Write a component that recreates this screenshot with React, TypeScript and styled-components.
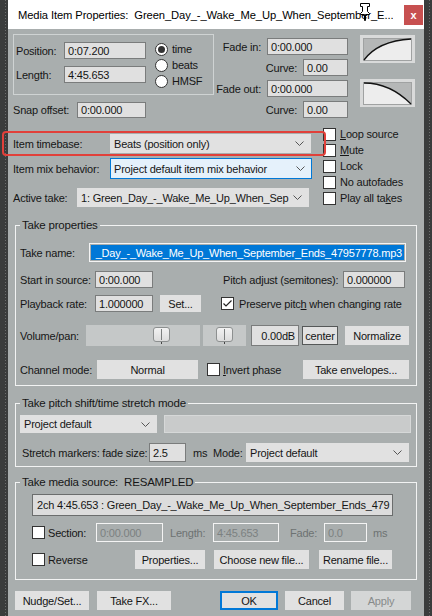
import React from "react";
import styled, { createGlobalStyle, css } from "styled-components";

const GlobalStyle = createGlobalStyle`
  html, body {
    margin: 0;
    padding: 0;
  }
  body {
    width: 432px;
    height: 616px;
    overflow: hidden;
    background: #363838;
    font-family: "Liberation Sans", Arial, sans-serif;
    font-size: 11px;
    letter-spacing: -0.2px;
    color: #161616;
  }
`;

const Screen = styled.div`
  display: flex;
  width: 432px;
  height: 616px;
  overflow: hidden;
`;

const Edge = styled.div<{ $dot: number }>`
  flex: none;
  width: 8px;
  background-color: #3a3c3c;
  background-image: repeating-linear-gradient(
    to bottom,
    #6c6e6e 0 1px,
    transparent 1px 3px
  );
  background-size: 1px 100%;
  background-position: ${(p) => p.$dot}px 0;
  background-repeat: no-repeat;
`;

const Window = styled.div`
  flex: none;
  width: 416px;
  display: flex;
  flex-direction: column;
  background: #a9aeae;
`;

const TitleBar = styled.div`
  position: relative;
  flex: none;
  height: 29px;
  display: flex;
  align-items: center;
  padding-left: 10px;
  background: #fff;
  color: #000;
  font-size: 11.2px;
  letter-spacing: -0.1px;
`;

const TitleText = styled.span`
  flex: 0 1 auto;
  min-width: 0;
  overflow: hidden;
  white-space: nowrap;
`;

const CloseBox = styled.div`
  flex: none;
  margin-left: auto;
  margin-right: 1px;
  width: 19px;
  height: 20px;
  display: flex;
  align-items: center;
  justify-content: center;
  background: #c75050;
  color: #fff;
  font-weight: bold;
  font-size: 11px;
`;

const Cursor = styled.svg`
  position: absolute;
  left: 351px;
  top: 3px;
`;

const Body = styled.div`
  display: flex;
  flex-direction: column;
  padding-left: 5px;
`;

const Row = styled.div<{ $mt?: number; $h?: number }>`
  position: relative;
  display: flex;
  align-items: center;
  flex: none;
  margin-top: ${(p) => p.$mt ?? 0}px;
  height: ${(p) => (p.$h ? `${p.$h}px` : "auto")};
`;

const Column = styled.div<{ $w?: number; $ml?: number; $mt?: number; $pt?: number; $gap?: number }>`
  display: flex;
  flex-direction: column;
  flex: none;
  width: ${(p) => (p.$w ? `${p.$w}px` : "auto")};
  margin-left: ${(p) => p.$ml ?? 0}px;
  margin-top: ${(p) => p.$mt ?? 0}px;
  padding-top: ${(p) => p.$pt ?? 0}px;
  gap: ${(p) => p.$gap ?? 0}px;
`;

const Text = styled.span<{ $w?: number; $ml?: number; $right?: boolean; $dim?: boolean }>`
  flex: none;
  width: ${(p) => (p.$w ? `${p.$w}px` : "auto")};
  margin-left: ${(p) => p.$ml ?? 0}px;
  text-align: ${(p) => (p.$right ? "right" : "left")};
  color: ${(p) => (p.$dim ? "#6d7272" : "#161616")};
  white-space: nowrap;
`;

const Field = styled.div<{ $w: number; $h?: number; $ml?: number; $disabled?: boolean; $right?: boolean }>`
  flex: none;
  box-sizing: border-box;
  width: ${(p) => p.$w}px;
  height: ${(p) => p.$h ?? 17}px;
  margin-left: ${(p) => p.$ml ?? 0}px;
  display: flex;
  align-items: center;
  justify-content: ${(p) => (p.$right ? "flex-end" : "flex-start")};
  padding: 0 3px;
  overflow: hidden;
  white-space: nowrap;
  ${(p) =>
    p.$disabled
      ? css`
          border: 1px solid #f4f4f4;
          background: transparent;
          color: #7c8181;
        `
      : css`
          border: 1px solid #7a7c7c;
          background: #e0e0e0;
          color: #141414;
        `}
`;

const NameField = styled.div<{ $w: number }>`
  flex: none;
  box-sizing: border-box;
  width: ${(p) => p.$w}px;
  height: 19px;
  border: 1px solid #f4f4f4;
  padding: 1px;
  display: flex;
`;

const Selection = styled.div`
  flex: 1;
  display: flex;
  align-items: center;
  justify-content: flex-end;
  overflow: hidden;
  white-space: nowrap;
  background: #0078d7;
  color: #fff;
  padding-right: 2px;
`;

const SourceField = styled.div<{ $w: number; $ml: number }>`
  flex: none;
  box-sizing: border-box;
  width: ${(p) => p.$w}px;
  height: 22px;
  margin-left: ${(p) => p.$ml}px;
  display: flex;
  align-items: center;
  padding: 0 4px;
  overflow: hidden;
  white-space: nowrap;
  border: 1px solid #6b6d6d;
  background: #dcdcdc;
`;

const Combo = styled.div<{ $w: number; $h?: number; $ml?: number; $focus?: boolean }>`
  flex: none;
  box-sizing: border-box;
  width: ${(p) => p.$w}px;
  height: ${(p) => p.$h ?? 19}px;
  margin-left: ${(p) => p.$ml ?? 0}px;
  display: flex;
  align-items: center;
  justify-content: space-between;
  padding: 0 6px 0 3px;
  white-space: nowrap;
  overflow: hidden;
  background: ${(p) => (p.$focus ? "#e5f1fb" : "#e1e1e1")};
  border: 1px solid ${(p) => (p.$focus ? "#0078d7" : "#e1e1e1")};
`;

const InactiveBar = styled.div<{ $w: number; $ml: number }>`
  flex: none;
  box-sizing: border-box;
  width: ${(p) => p.$w}px;
  height: 18px;
  margin-left: ${(p) => p.$ml}px;
  background: #c9cbcb;
  border: 1px solid #d6d8d8;
`;

const Btn = styled.button<{ $w: number; $h?: number; $ml?: number; $tone?: "primary" | "outlined" }>`
  flex: none;
  box-sizing: border-box;
  width: ${(p) => p.$w}px;
  height: ${(p) => p.$h ?? 19}px;
  margin: 0 0 0 ${(p) => p.$ml ?? 0}px;
  padding: 0;
  font: inherit;
  letter-spacing: inherit;
  color: #141414;
  background: #e1e1e1;
  border: 1px solid #e1e1e1;
  white-space: nowrap;
  ${(p) =>
    p.$tone === "primary" &&
    css`
      border: 2px solid #0078d7;
    `}
  ${(p) =>
    p.$tone === "outlined" &&
    css`
      border: 1px solid #555858;
    `}
  &:disabled {
    color: #878b8b;
    background: #d4d6d6;
    border-color: #d4d6d6;
  }
`;

const Box = styled.span<{ $ml?: number }>`
  flex: none;
  box-sizing: border-box;
  width: 13px;
  height: 13px;
  margin-left: ${(p) => p.$ml ?? 0}px;
  border: 1px solid #333;
  background: #fff;
  display: flex;
  align-items: center;
  justify-content: center;
`;

const RadioDot = styled.span<{ $on?: boolean }>`
  flex: none;
  box-sizing: border-box;
  width: 13px;
  height: 13px;
  border-radius: 50%;
  border: 1px solid #333;
  background: #fff;
  display: flex;
  align-items: center;
  justify-content: center;
  &::after {
    content: "";
    width: 7px;
    height: 7px;
    border-radius: 50%;
    background: ${(p) => (p.$on ? "#333" : "transparent")};
  }
`;

const OptionRow = styled.div`
  display: flex;
  align-items: center;
  height: 16px;
  gap: 4px;
`;

const TopSection = styled.div`
  display: flex;
  margin-top: 5px;
`;

const TimeBox = styled.div`
  box-sizing: border-box;
  width: 201px;
  height: 61px;
  display: flex;
  align-items: flex-start;
  padding: 7px 0 0 2px;
  border: 1px solid #cfd3d3;
`;

const CurveFrame = styled.div`
  width: 55px;
  height: 28px;
  background: #d9dada;
`;

const MidSection = styled.div`
  display: flex;
  margin-top: 8px;
`;

const Highlight = styled.div`
  position: absolute;
  left: -11px;
  top: -3px;
  width: 324px;
  height: 25px;
  box-sizing: border-box;
  border: 2.5px solid #e1403a;
  border-radius: 4px;
  pointer-events: none;
`;

const Group = styled.fieldset<{ $mt: number; $pb: number }>`
  box-sizing: border-box;
  width: 402px;
  min-width: 0;
  margin: ${(p) => p.$mt}px 0 0 2px;
  padding: 0 0 ${(p) => p.$pb}px 4px;
  border: 1px solid #f2f3f3;
`;

const Legend = styled.legend`
  padding: 0 2px;
  margin-left: 0;
  line-height: 14px;
  font-size: 11.5px;
`;

const Track = styled.div<{ $w: number; $ml?: number }>`
  position: relative;
  flex: none;
  width: ${(p) => p.$w}px;
  height: 21px;
  margin-left: ${(p) => p.$ml ?? 0}px;
  background: #c5c8c8;
`;

const Thumb = styled.div`
  position: absolute;
  top: 2px;
  box-sizing: border-box;
  width: 17px;
  height: 15px;
  border: 1px solid #8d9090;
  border-radius: 3px;
  background: linear-gradient(#f2f2f2, #dcdcdc);
  &::before {
    content: "";
    position: absolute;
    left: 7px;
    top: 1px;
    width: 1px;
    height: 11px;
    background: #7b7e7e;
  }
  &::after {
    content: "";
    position: absolute;
    left: 7px;
    top: 14px;
    width: 1px;
    height: 2px;
    background: #444;
  }
`;

const Chevron = () => (
  <svg width="9" height="5" viewBox="0 0 9 5">
    <path d="M0.5 0.5 L4.5 4.5 L8.5 0.5" fill="none" stroke="#555" strokeWidth="1" />
  </svg>
);

const Check: React.FC<{ on?: boolean; ml?: number }> = ({ on, ml }) => (
  <Box $ml={ml}>
    {on && (
      <svg width="11" height="11" viewBox="0 0 11 11">
        <path d="M1.5 5.5 L4 8 L9.5 2.5" fill="none" stroke="#222" strokeWidth="1.2" />
      </svg>
    )}
  </Box>
);

const FadeCurve: React.FC<{ out?: boolean }> = ({ out }) => (
  <CurveFrame>
    <svg width="55" height="28" viewBox="0 0 55 28">
      <rect x="3.5" y="3.5" width="48" height="22" fill="#ededed" stroke="#a0a2a2" />
      {out ? (
        <>
          <path d="M4 4 Q30 4 51 25 L51 4 Z" fill="#b5b7b7" />
          <path d="M4 4 Q30 4 51 25" fill="none" stroke="#111" strokeWidth="1.3" />
        </>
      ) : (
        <>
          <path d="M4 25 Q18 6 51 4 L4 4 Z" fill="#b5b7b7" />
          <path d="M4 25 Q18 6 51 4" fill="none" stroke="#111" strokeWidth="1.3" />
        </>
      )}
    </svg>
  </CurveFrame>
);

const checks: { label: React.ReactNode }[] = [
  { label: <><u>L</u>oop source</> },
  { label: <><u>M</u>ute</> },
  { label: "Lock" },
  { label: "No autofades" },
  { label: <>Play all ta<u>k</u>es</> },
];

export default function App() {
  return (
    <>
      <GlobalStyle />
      <Screen>
        <Edge $dot={5} />
        <Window>
          <TitleBar>
            <TitleText>Media Item Properties:&nbsp; Green_Day_-_Wake_Me_Up_When_September_E...</TitleText>
            <Cursor width="12" height="18" viewBox="0 0 12 18">
              <path
                d="M1.5 0.5 H10.5 V3.5 H8.5 V8.5 L10.5 10.5 V11.5 H6.5 V17.5 H5.5 V11.5 H1.5 V10.5 L3.5 8.5 V3.5 H1.5 Z"
                fill="#fff"
                stroke="#000"
              />
            </Cursor>
            <CloseBox>x</CloseBox>
          </TitleBar>

          <Body>
            <TopSection>
              <Column $w={201}>
                <TimeBox>
                  <Column $gap={7}>
                    <Row $h={17}>
                      <Text $w={48}>Position:</Text>
                      <Field $w={82}>0:07.200</Field>
                    </Row>
                    <Row $h={17}>
                      <Text $w={48}>Length:</Text>
                      <Field $w={82}>4:45.653</Field>
                    </Row>
                  </Column>
                  <Column $ml={9} $mt={-1}>
                    <OptionRow>
                      <RadioDot $on />
                      <Text>time</Text>
                    </OptionRow>
                    <OptionRow>
                      <RadioDot />
                      <Text>beats</Text>
                    </OptionRow>
                    <OptionRow>
                      <RadioDot />
                      <Text>HMSF</Text>
                    </OptionRow>
                  </Column>
                </TimeBox>
                <Row $mt={7} $h={16}>
                  <Text $w={64}>Snap offset:</Text>
                  <Field $w={69} $h={16}>0:00.000</Field>
                </Row>
              </Column>

              <Column $pt={4} $gap={4}>
                <Row $h={17}>
                  <Text $w={47} $right>Fade in:</Text>
                  <Field $w={81} $ml={6}>0:00.000</Field>
                </Row>
                <Row $h={17}>
                  <Text $w={83} $right>Curve:</Text>
                  <Field $w={45} $ml={6}>0.00</Field>
                </Row>
                <Row $h={17}>
                  <Text $w={47} $right>Fade out:</Text>
                  <Field $w={81} $ml={6}>0:00.000</Field>
                </Row>
                <Row $h={17}>
                  <Text $w={83} $right>Curve:</Text>
                  <Field $w={45} $ml={6}>0.00</Field>
                </Row>
              </Column>

              <Column $ml={12} $pt={1} $gap={16}>
                <FadeCurve />
                <FadeCurve out />
              </Column>
            </TopSection>

            <MidSection>
              <Column $w={299} $pt={8}>
                <Row $h={19}>
                  <Highlight />
                  <Text $w={97}>Item timebase:</Text>
                  <Combo $w={201}>
                    <span>Beats (position only)</span>
                    <Chevron />
                  </Combo>
                </Row>
                <Row $mt={5} $h={21}>
                  <Text $w={97}>Item mix behavior:</Text>
                  <Combo $w={202} $h={21} $focus>
                    <span>Project default item mix behavior</span>
                    <Chevron />
                  </Combo>
                </Row>
                <Row $mt={9} $h={19}>
                  <Text $w={64}>Active take:</Text>
                  <Combo $w={232}>
                    <span>1: Green_Day_-_Wake_Me_Up_When_Sep</span>
                    <Chevron />
                  </Combo>
                </Row>
              </Column>
              <Column $ml={11}>
                {checks.map((c, i) => (
                  <OptionRow key={i}>
                    <Check />
                    <Text>{c.label}</Text>
                  </OptionRow>
                ))}
              </Column>
            </MidSection>

            <Group $mt={11} $pb={6}>
              <Legend>Take properties</Legend>
              <Row $mt={11} $h={19}>
                <Text $w={69}>Take name:</Text>
                <NameField $w={317}>
                  <Selection>
                    <span>_Day_-_Wake_Me_Up_When_September_Ends_47957778.mp3</span>
                  </Selection>
                </NameField>
              </Row>
              <Row $mt={9} $h={17}>
                <Text $w={75}>Start in source:</Text>
                <Field $w={58}>0:00.000</Field>
                <Text $w={120} $ml={70}>Pitch adjust (semitones):</Text>
                <Field $w={62}>0.000000</Field>
              </Row>
              <Row $mt={7} $h={17}>
                <Text $w={75}>Playback rate:</Text>
                <Field $w={58}>1.000000</Field>
                <Btn $w={41} $h={17} $ml={7}>Set...</Btn>
                <Check on ml={20} />
                <Text $ml={5}>
                  Preserve pitc<u>h</u> when changing rate
                </Text>
              </Row>
              <Row $mt={13} $h={21}>
                <Text $w={66}>Volume/pan:</Text>
                <Track $w={114}>
                  <Thumb style={{ left: 67 }} />
                </Track>
                <Track $w={43} $ml={3}>
                  <Thumb style={{ left: 13 }} />
                </Track>
                <Field $w={48} $h={21} $ml={5} $right>0.00dB</Field>
                <Btn $w={36} $ml={3} $tone="outlined">center</Btn>
                <Btn $w={64} $ml={7}>Normalize</Btn>
              </Row>
              <Row $mt={14} $h={19}>
                <Text $w={77}>Channel mode:</Text>
                <Btn $w={101}>Normal</Btn>
                <Check ml={9} />
                <Text $w={80} $ml={3}>
                  <u>I</u>nvert phase
                </Text>
                <Btn $w={106}>Take envelopes...</Btn>
              </Row>
            </Group>

            <Group $mt={10} $pb={4}>
              <Legend>Take pitch shift/time stretch mode</Legend>
              <Row $mt={5} $h={18}>
                <Combo $w={137} $h={18}>
                  <span>Project default</span>
                  <Chevron />
                </Combo>
                <InactiveBar $w={247} $ml={7} />
              </Row>
              <Row $mt={10} $h={19}>
                <Text $w={127} $ml={2}>Stretch markers: fade size:</Text>
                <Field $w={37} $h={19}>2.5</Field>
                <Text $w={20} $ml={7}>ms</Text>
                <Text $w={29} $right>Mode:</Text>
                <Combo $w={163} $ml={4}>
                  <span>Project default</span>
                  <Chevron />
                </Combo>
              </Row>
            </Group>

            <Group $mt={8} $pb={10}>
              <Legend>Take media source:&nbsp; RESAMPLED</Legend>
              <Row $mt={5} $h={22}>
                <SourceField $w={361} $ml={12}>
                  2ch 4:45.653 : Green_Day_-_Wake_Me_Up_When_September_Ends_479
                </SourceField>
              </Row>
              <Row $mt={7} $h={19}>
                <Check ml={12} />
                <Text $w={48} $ml={3}>Section:</Text>
                <Field $w={67} $h={19} $disabled>0:00.000</Field>
                <Text $w={43} $ml={7} $dim>Length:</Text>
                <Field $w={66} $h={19} $disabled>4:45.653</Field>
                <Text $w={34} $ml={11} $dim>Fade:</Text>
                <Field $w={43} $h={19} $disabled>0.0</Field>
                <Text $ml={6} $dim>ms</Text>
              </Row>
              <Row $mt={8} $h={19}>
                <Check ml={12} />
                <Text $w={87} $ml={3}>Reverse</Text>
                <Btn $w={70}>Properties...</Btn>
                <Btn $w={95} $ml={9}>Choose new file...</Btn>
                <Btn $w={73} $ml={10}>Rename file...</Btn>
              </Row>
            </Group>

            <Row $mt={11} $h={19}>
              <Btn $w={74} $ml={2}>Nudge/Set...</Btn>
              <Btn $w={74} $ml={8}>Take FX...</Btn>
              <Btn $w={58} $ml={49} $tone="primary">OK</Btn>
              <Btn $w={59} $ml={7}>Cancel</Btn>
              <Btn $w={60} $ml={7} disabled>Apply</Btn>
            </Row>
          </Body>
        </Window>
        <Edge $dot={5} />
      </Screen>
    </>
  );
}
